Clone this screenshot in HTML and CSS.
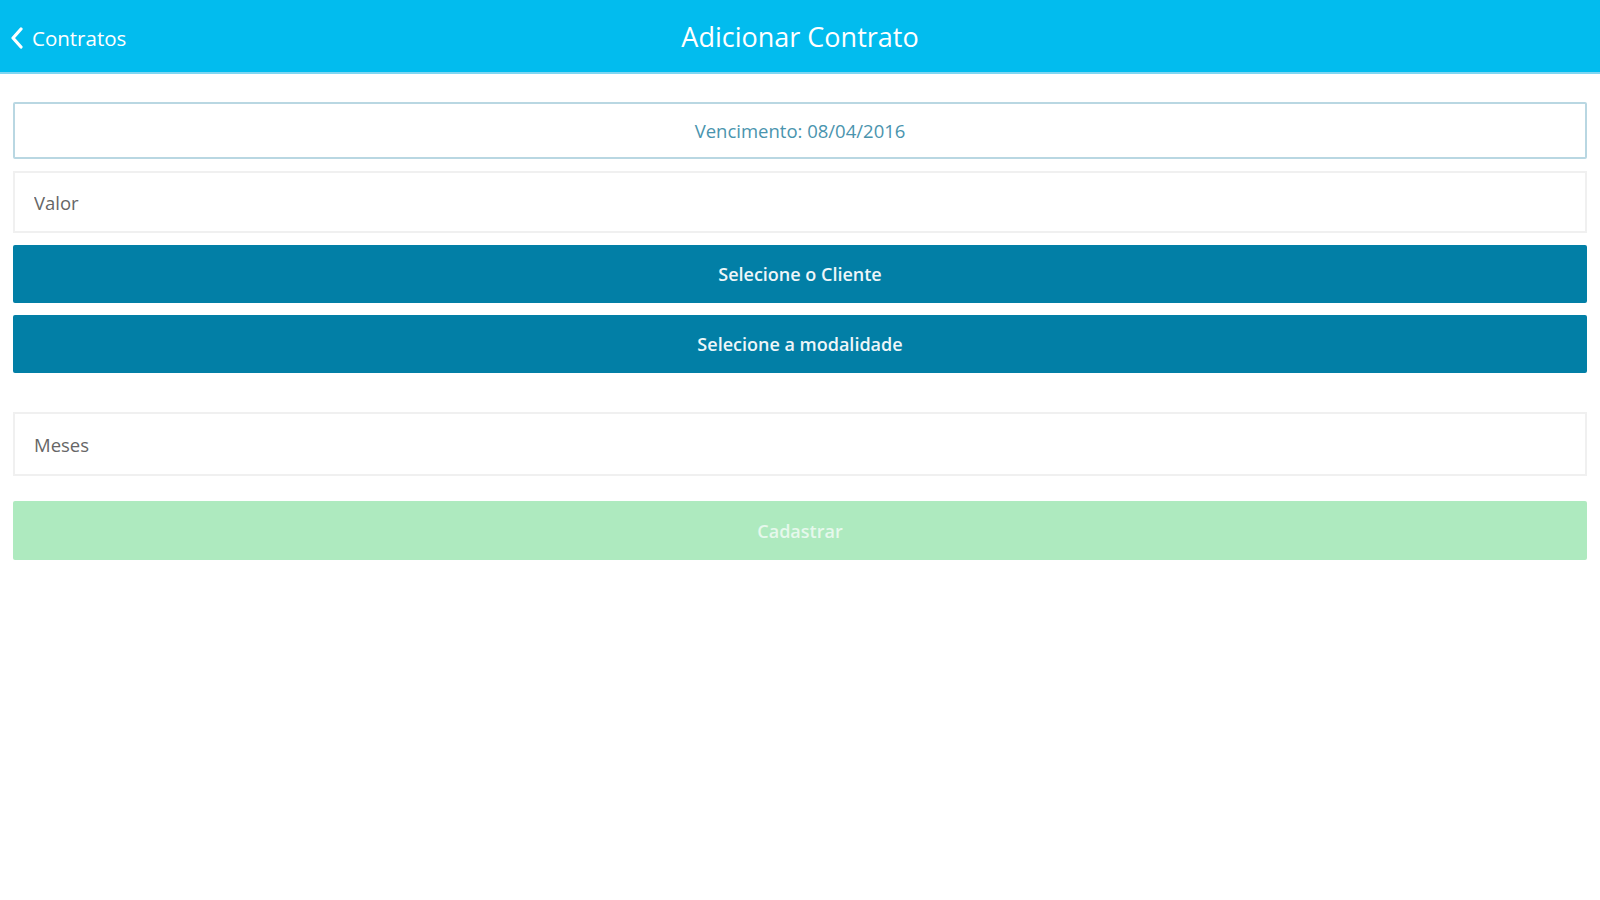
FILE: index.html
```html
<!DOCTYPE html>
<html lang="pt">
<head>
    <meta charset="UTF-8">
    <meta name="viewport" content="width=device-width, initial-scale=1.0">
    <title>Adicionar Contrato</title>
    <link rel="stylesheet" href="styles.css">
</head>
<body>

    <!-- Top bar -->
    <div class="navbar">
        <a class="back" href="#">
            <svg class="chevron" width="14" height="22" viewBox="0 0 14 22">
                <path d="M11 2 L3 11 L11 20" fill="none" stroke="#ffffff" stroke-width="3.2" stroke-linecap="round" stroke-linejoin="round"/>
            </svg>
            <span>Contratos</span>
        </a>
        <h1 class="title">Adicionar Contrato</h1>
    </div>

    <form class="form-container">
        <div class="date-field">Vencimento: 08/04/2016</div>

        <input type="text" class="field" placeholder="Valor">

        <button type="button" class="btn-select">Selecione o Cliente</button>
        <button type="button" class="btn-select">Selecione a modalidade</button>

        <input type="text" class="field field-months" placeholder="Meses">

        <button type="submit" class="btn-submit" disabled>Cadastrar</button>
    </form>

</body>
</html>
```

FILE: styles.css
```css
body {
    margin: 0;
    font-family: "Open Sans", "Noto Sans", sans-serif;
    background: #ffffff;
}

.navbar {
    position: relative;
    height: 72px;
    background-color: #02bcee;
    border-bottom: 2px solid #7fd6f2;
    display: flex;
    align-items: center;
    justify-content: center;
}

.back {
    position: absolute;
    left: 10px;
    top: 24px;
    display: flex;
    align-items: center;
    gap: 8px;
    color: #ffffff;
    text-decoration: none;
    font-size: 20.5px;
}

.chevron {
    display: block;
}

.title {
    margin: 0;
    color: #ffffff;
    font-size: 27px;
    font-weight: 400;
}

.form-container {
    display: flex;
    flex-direction: column;
    gap: 12px;
    padding: 28px 13px 0 13px;
}

.date-field {
    height: 53px;
    border: 2px solid #b9d7e2;
    border-radius: 2px;
    display: flex;
    align-items: center;
    justify-content: center;
    color: #4a94ae;
    font-size: 18.5px;
}

.field {
    height: 62px;
    border: 2px solid #f0f0f0;
    padding: 0 19px;
    box-sizing: border-box;
    font-family: inherit;
    font-size: 18.5px;
    color: #555555;
    outline: none;
}

.field::placeholder {
    color: #666666;
}

.field-months {
    margin-top: 27px;
    height: 64px;
}

.btn-select {
    height: 58px;
    border: none;
    border-radius: 2px;
    background-color: #027fa6;
    color: #eef6f9;
    font-family: inherit;
    font-size: 18px;
    font-weight: 600;
    cursor: pointer;
}

.btn-submit {
    margin-top: 13px;
    height: 59px;
    border: none;
    border-radius: 2px;
    background-color: #aeeabf;
    color: #e6f8ec;
    font-family: inherit;
    font-size: 18px;
    font-weight: 600;
}
```
